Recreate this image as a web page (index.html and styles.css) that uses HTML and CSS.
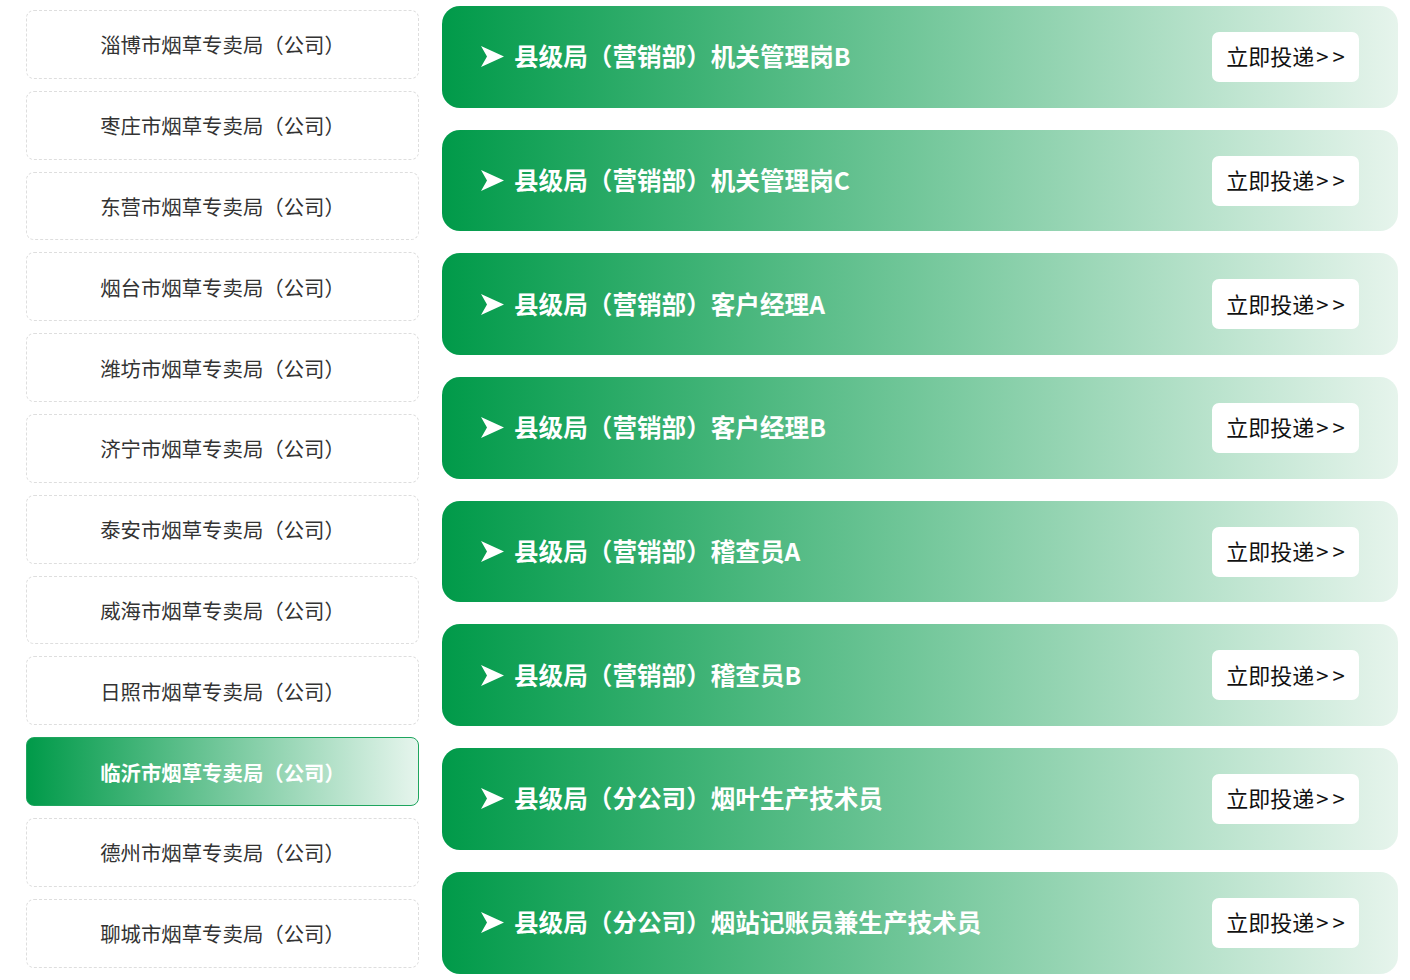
FILE: index.html
```html
<!DOCTYPE html>
<html lang="zh-CN">
<head>
<meta charset="utf-8">
<title>岗位列表</title>
<link rel="stylesheet" href="styles.css">
</head>
<body>
<div class="page">
  <ul class="units">
    <li class="unit">淄博市烟草专卖局（公司）</li>
    <li class="unit">枣庄市烟草专卖局（公司）</li>
    <li class="unit">东营市烟草专卖局（公司）</li>
    <li class="unit">烟台市烟草专卖局（公司）</li>
    <li class="unit">潍坊市烟草专卖局（公司）</li>
    <li class="unit">济宁市烟草专卖局（公司）</li>
    <li class="unit">泰安市烟草专卖局（公司）</li>
    <li class="unit">威海市烟草专卖局（公司）</li>
    <li class="unit">日照市烟草专卖局（公司）</li>
    <li class="unit active">临沂市烟草专卖局（公司）</li>
    <li class="unit">德州市烟草专卖局（公司）</li>
    <li class="unit">聊城市烟草专卖局（公司）</li>
    <li class="unit" aria-hidden="true"></li>
  </ul>
  <div class="jobs">
    <div class="job"><span class="title"><svg class="arrow" viewBox="0 0 23 21"><polygon points="0,0 23,10.5 0,21 6,10.5" fill="#fff"/></svg>县级局（营销部）机关管理岗B</span><a class="apply">立即投递<span class="gt">&gt;&gt;</span></a></div>
    <div class="job"><span class="title"><svg class="arrow" viewBox="0 0 23 21"><polygon points="0,0 23,10.5 0,21 6,10.5" fill="#fff"/></svg>县级局（营销部）机关管理岗C</span><a class="apply">立即投递<span class="gt">&gt;&gt;</span></a></div>
    <div class="job"><span class="title"><svg class="arrow" viewBox="0 0 23 21"><polygon points="0,0 23,10.5 0,21 6,10.5" fill="#fff"/></svg>县级局（营销部）客户经理A</span><a class="apply">立即投递<span class="gt">&gt;&gt;</span></a></div>
    <div class="job"><span class="title"><svg class="arrow" viewBox="0 0 23 21"><polygon points="0,0 23,10.5 0,21 6,10.5" fill="#fff"/></svg>县级局（营销部）客户经理B</span><a class="apply">立即投递<span class="gt">&gt;&gt;</span></a></div>
    <div class="job"><span class="title"><svg class="arrow" viewBox="0 0 23 21"><polygon points="0,0 23,10.5 0,21 6,10.5" fill="#fff"/></svg>县级局（营销部）稽查员A</span><a class="apply">立即投递<span class="gt">&gt;&gt;</span></a></div>
    <div class="job"><span class="title"><svg class="arrow" viewBox="0 0 23 21"><polygon points="0,0 23,10.5 0,21 6,10.5" fill="#fff"/></svg>县级局（营销部）稽查员B</span><a class="apply">立即投递<span class="gt">&gt;&gt;</span></a></div>
    <div class="job"><span class="title"><svg class="arrow" viewBox="0 0 23 21"><polygon points="0,0 23,10.5 0,21 6,10.5" fill="#fff"/></svg>县级局（分公司）烟叶生产技术员</span><a class="apply">立即投递<span class="gt">&gt;&gt;</span></a></div>
    <div class="job"><span class="title"><svg class="arrow" viewBox="0 0 23 21"><polygon points="0,0 23,10.5 0,21 6,10.5" fill="#fff"/></svg>县级局（分公司）烟站记账员兼生产技术员</span><a class="apply">立即投递<span class="gt">&gt;&gt;</span></a></div>
  </div>
</div>
</body>
</html>
```

FILE: styles.css
```css
html, body {
  margin: 0;
  padding: 0;
  background: #fff;
  overflow: hidden;
  height: 980px;
}
body {
  font-family: "Noto Sans CJK SC", "Noto Sans", sans-serif;
}
.page {
  display: flex;
  align-items: flex-start;
  padding-left: 26px;
  gap: 23px;
}
.units {
  list-style: none;
  margin: 0;
  padding: 10px 0 0;
  width: 393px;
  flex: none;
  display: flex;
  flex-direction: column;
  gap: 12px;
}
.unit {
  box-sizing: border-box;
  height: 68.8px;
  border: 1px dashed #dedede;
  border-radius: 8px;
  display: flex;
  align-items: center;
  justify-content: center;
  font-size: 20.4px;
  color: #333;
  padding-left: 0;
}
.unit.active {
  border: 1px solid #1ea55e;
  background: linear-gradient(to right, #009a49, #e6f5ed);
  color: #fff;
  font-weight: 700;
}
.jobs {
  padding-top: 6px;
  width: 956px;
  flex: none;
  display: flex;
  flex-direction: column;
  gap: 22px;
}
.job {
  box-sizing: border-box;
  height: 101.7px;
  border-radius: 18px;
  background: linear-gradient(to right, #009a49, #e6f4ec);
  display: flex;
  align-items: center;
  justify-content: space-between;
  padding: 0 39px;
}
.title {
  display: flex;
  align-items: center;
  gap: 10px;
  color: #fff;
  font-weight: 700;
  font-size: 24.6px;
  padding-bottom: 3px;
}
.arrow {
  width: 23px;
  height: 21px;
  flex: none;
  margin-top: 3px;
}
.apply {
  box-sizing: border-box;
  width: 147px;
  height: 50px;
  background: #fff;
  border-radius: 7px;
  display: flex;
  align-items: center;
  justify-content: center;
  font-size: 22px;
  color: #111;
  padding-bottom: 3px;
}
.gt {
  letter-spacing: 4px;
  margin-right: -4px;
  padding-left: 2px;
}
```
